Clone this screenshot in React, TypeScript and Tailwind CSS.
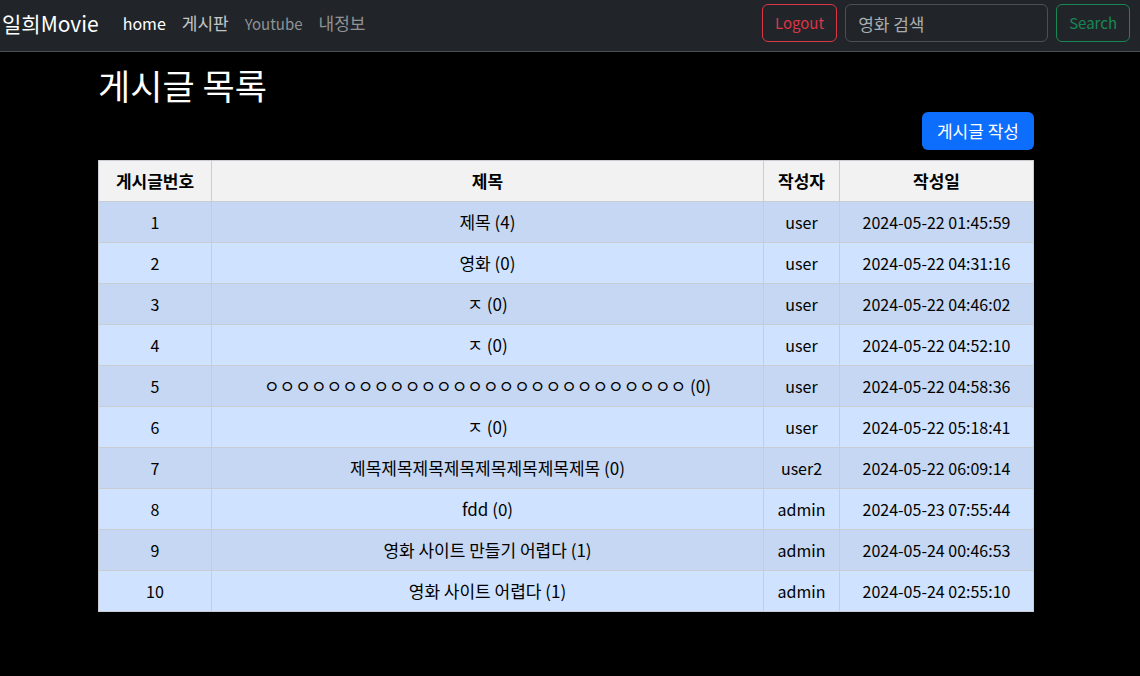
type Post = { id: number; title: string; comments: number; author: string; date: string };

const posts: Post[] = [
  { id: 1, title: "제목", comments: 4, author: "user", date: "2024-05-22 01:45:59" },
  { id: 2, title: "영화", comments: 0, author: "user", date: "2024-05-22 04:31:16" },
  { id: 3, title: "ㅈ", comments: 0, author: "user", date: "2024-05-22 04:46:02" },
  { id: 4, title: "ㅈ", comments: 0, author: "user", date: "2024-05-22 04:52:10" },
  { id: 5, title: "ㅇㅇㅇㅇㅇㅇㅇㅇㅇㅇㅇㅇㅇㅇㅇㅇㅇㅇㅇㅇㅇㅇㅇㅇㅇㅇㅇ", comments: 0, author: "user", date: "2024-05-22 04:58:36" },
  { id: 6, title: "ㅈ", comments: 0, author: "user", date: "2024-05-22 05:18:41" },
  { id: 7, title: "제목제목제목제목제목제목제목제목", comments: 0, author: "user2", date: "2024-05-22 06:09:14" },
  { id: 8, title: "fdd", comments: 0, author: "admin", date: "2024-05-23 07:55:44" },
  { id: 9, title: "영화 사이트 만들기 어렵다", comments: 1, author: "admin", date: "2024-05-24 00:46:53" },
  { id: 10, title: "영화 사이트 어렵다", comments: 1, author: "admin", date: "2024-05-24 02:55:10" },
];

const cell = "border border-[#c9ccd0] px-2 py-2";

function Navbar() {
  return (
    <nav className="flex flex-wrap items-center border-b border-[#495057] bg-[#212529] pt-1 pr-2.5 pb-[9px] pl-0.5">
      <a href="#" className="mr-6 text-[21px] leading-[30px] text-white">일희Movie</a>
      <ul className="flex items-center gap-4">
        <li><a href="#" className="text-white">home</a></li>
        <li><a href="#" className="text-[17px] text-[#c5c6c7]">게시판</a></li>
        <li><a href="#" className="text-[15px] text-[#909294]">Youtube</a></li>
        <li><a href="#" className="text-[17px] text-[#909294]">내정보</a></li>
      </ul>
      <form className="ml-auto flex gap-2" onSubmit={(e) => e.preventDefault()}>
        <button type="button" className="h-[38px] rounded-md border border-[#dc3545] px-3 text-[15px] text-[#dc3545]">Logout</button>
        <input
          type="search"
          aria-label="영화 검색"
          placeholder="영화 검색"
          className="h-[38px] w-[203px] rounded-md border border-[#495057] bg-[#212529] px-3 text-[17px] text-[#dee2e6] placeholder:text-[#a9adb1]"
        />
        <button type="submit" className="h-[38px] rounded-md border border-[#198754] px-3 text-[15px] text-[#198754]">Search</button>
      </form>
    </nav>
  );
}

export default function App() {
  return (
    <div className="min-h-screen bg-black font-['Noto_Sans_CJK_KR',sans-serif] text-base leading-6 text-black">
      <Navbar />
      <main className="pt-3 pr-[106px] pb-16 pl-[98px]">
        <h1 className="mb-1.5 text-[35px] leading-[42px] text-white">게시글 목록</h1>
        <div className="mb-2.5 flex justify-end">
          <button type="button" className="h-[38px] rounded-md bg-[#0d6efd] px-[15px] text-[17px] text-white">게시글 작성</button>
        </div>
        <table className="w-full table-fixed border-collapse text-center">
          <colgroup>
            <col className="w-[113px]" />
            <col />
            <col className="w-[76px]" />
            <col className="w-[194px]" />
          </colgroup>
          <thead>
            <tr className="bg-[#f2f2f2] text-[17px]">
              <th className={cell}>게시글번호</th>
              <th className={cell}>제목</th>
              <th className={cell}>작성자</th>
              <th className={cell}>작성일</th>
            </tr>
          </thead>
          <tbody>
            {posts.map((post) => (
              <tr key={post.id} className="bg-[#cfe2ff] odd:bg-[#c5d7f2]">
                <td className={cell}>{post.id}</td>
                <td className={`${cell} text-[17px]`}>
                  <a href="#">{post.title}</a> ({post.comments})
                </td>
                <td className={cell}>{post.author}</td>
                <td className={cell}>{post.date}</td>
              </tr>
            ))}
          </tbody>
        </table>
      </main>
    </div>
  );
}
